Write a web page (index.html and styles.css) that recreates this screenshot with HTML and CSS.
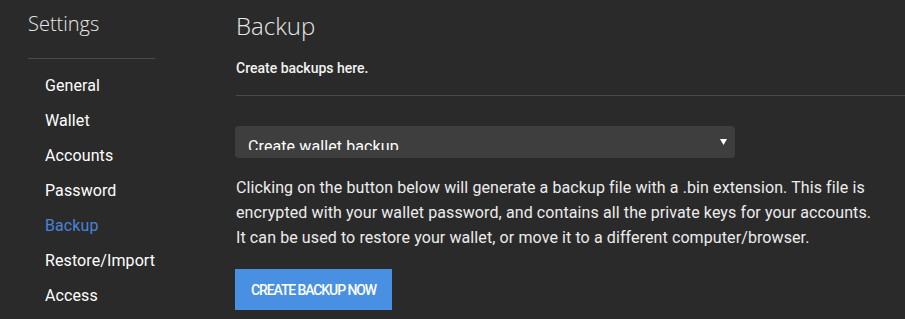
FILE: index.html
```html
<!DOCTYPE html>
<html>
<head>
<meta charset="utf-8">
<link rel="stylesheet" href="styles.css">
</head>
<body>
<div class="layout">
  <aside class="sidebar">
    <h1 class="side-title">Settings</h1>
    <div class="side-rule"></div>
    <nav class="nav">
      <a class="nav-item">General</a>
      <a class="nav-item">Wallet</a>
      <a class="nav-item">Accounts</a>
      <a class="nav-item">Password</a>
      <a class="nav-item active">Backup</a>
      <a class="nav-item">Restore/Import</a>
      <a class="nav-item">Access</a>
    </nav>
  </aside>
  <main class="main">
    <h2 class="page-title">Backup</h2>
    <p class="subtitle">Create backups here.</p>
    <div class="rule"></div>
    <div class="select">
      <div class="select-clip"><span class="select-text">Create wallet backup</span></div>
      <svg class="select-arrow" width="7" height="6" viewBox="0 0 7 6"><polygon points="0,0 7,0 3.5,6" fill="#fff"/></svg>
    </div>
    <p class="desc">Clicking on the button below will generate a backup file with a .bin extension. This file is encrypted with your wallet password, and contains all the private keys for your accounts. It can be used to restore your wallet, or move it to a different computer/browser.</p>
    <button class="btn">CREATE BACKUP NOW</button>
  </main>
</div>
</body>
</html>
```
FILE: styles.css
```css
html, body {
  margin: 0;
  padding: 0;
  background: #2a2a2a;
  height: 100%;
  overflow: hidden;
}
body {
  font-family: Roboto, "Liberation Sans", sans-serif;
  color: #fff;
}
.layout {
  display: flex;
  width: 905px;
  height: 319px;
}
.sidebar {
  width: 208px;
  padding-left: 28px;
  flex: none;
}
.side-title {
  margin: 0;
  padding-top: 10px;
  font-family: "Open Sans", sans-serif;
  font-weight: 300;
  font-size: 20px;
  line-height: 28px;
  color: #e8e8e8;
}
.side-rule {
  width: 127px;
  height: 1px;
  background: #4a4a4a;
  margin-top: 20px;
}
.nav {
  display: flex;
  flex-direction: column;
  padding-left: 17px;
  padding-top: 9px;
}
.nav-item {
  font-size: 16px;
  line-height: 35px;
  color: #fff;
  font-weight: 400;
  letter-spacing: 0.1px;
}
.nav-item.active {
  color: #4a82d6;
}
.main {
  flex: 1;
  padding-right: 29px;
}
.page-title {
  margin: 0;
  padding-top: 9px;
  font-family: "Open Sans", sans-serif;
  font-weight: 300;
  font-size: 24px;
  line-height: 34px;
  color: #e8e8e8;
}
.subtitle {
  margin: 0;
  padding-top: 17px;
  font-size: 14px;
  font-weight: 500;
  line-height: 16px;
  color: #f2f2f2;
}
.rule {
  height: 1px;
  background: #4a4a4a;
  margin-top: 19px;
  margin-right: -29px;
}
.select {
  margin-top: 30px;
  margin-left: -1px;
  width: 500px;
  height: 32px;
  box-sizing: border-box;
  background: #3e3e3e;
  border-radius: 4px;
  padding: 0 13px;
  display: flex;
  align-items: flex-start;
  justify-content: space-between;
}
.select-clip {
  height: 24px;
  overflow: hidden;
  padding-top: 13px;
  box-sizing: border-box;
}
.select-text {
  display: block;
  font-size: 16px;
  line-height: 16px;
  color: #fff;
  letter-spacing: 0.1px;
}
.select-arrow {
  margin-top: 13px;
  margin-right: -5px;
}
.desc {
  margin: 0;
  padding-top: 17px;
  font-size: 16px;
  line-height: 25px;
  color: #ececec;
  letter-spacing: 0.1px;
}
.btn {
  margin-top: 19px;
  margin-left: -1px;
  width: 157px;
  height: 41px;
  border: none;
  border-radius: 0;
  background: #4a90e2;
  color: #fff;
  font-family: Roboto, "Liberation Sans", sans-serif;
  font-size: 14px;
  font-weight: 500;
  letter-spacing: -1.1px;
  padding: 0;
}
```
